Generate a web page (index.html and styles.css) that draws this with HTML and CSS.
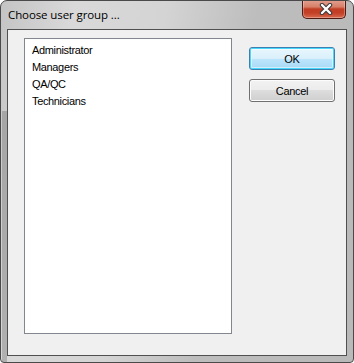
FILE: index.html
```html
<!DOCTYPE html>
<html lang="en">
<head>
    <meta charset="UTF-8">
    <title>Choose user group</title>
    <link rel="stylesheet" href="styles.css">
</head>
<body>
    <div class="window">
        <div class="titlebar">
            <span class="title">Choose user group ...</span>
            <button class="close-btn" title="Close">
                <svg width="14" height="12" viewBox="0 0 14 12">
                    <path d="M3 2 L11 10 M11 2 L3 10" stroke="#3a3a3a" stroke-width="4.4" stroke-linecap="round"/>
                    <path d="M3 2 L11 10 M11 2 L3 10" stroke="#ffffff" stroke-width="2.4" stroke-linecap="round"/>
                </svg>
            </button>
        </div>
        <div class="client">
            <ul class="group-list">
                <li>Administrator</li>
                <li>Managers</li>
                <li>QA/QC</li>
                <li>Technicians</li>
            </ul>
            <div class="btn-col">
                <button class="dlg-btn default">OK</button>
                <button class="dlg-btn">Cancel</button>
            </div>
        </div>
    </div>
</body>
</html>
```

FILE: styles.css
```css
body {
    margin: 0;
    background: #ffffff;
}
.window {
    width: 354px;
    height: 363px;
    box-sizing: border-box;
    border: 1px solid #4a4a4a;
    border-radius: 7px 7px 4px 4px;
    background:
        linear-gradient(90deg, rgba(0,0,0,0.18) 0px, rgba(0,0,0,0.18) 5px, transparent 5px) 1px 110px / 6px 100% no-repeat,
        linear-gradient(100deg, #c4c4c4 0%, #d9d9d9 18%, #d4d4d4 40%, #bdbdbd 62%, #b9b9b9 100%);
    padding: 0 6px 6px 6px;
    display: flex;
    flex-direction: column;
    overflow: hidden;
}
.titlebar {
    height: 28px;
    display: flex;
    align-items: flex-start;
}
.title {
    font-family: 'Open Sans', 'Noto Sans', sans-serif;
    font-size: 11.5px;
    color: #000000;
    margin: 6px 0 0 1px;
    letter-spacing: -0.1px;
}
.close-btn {
    margin-left: auto;
    margin-right: 1px;
    width: 44px;
    height: 19px;
    margin-top: -1px;
    border: 1px solid #4e1a12;
    border-top: none;
    border-radius: 0 0 5px 5px;
    background: linear-gradient(180deg, #e3a191 0%, #d77f69 38%, #c13e25 50%, #c33f26 72%, #d86a50 100%);
    box-shadow: inset 0 0 0 1px rgba(255,255,255,0.3);
    padding: 0;
    display: flex;
    align-items: center;
    justify-content: center;
}
.close-btn svg {
    display: block;
    margin-left: 4px;
}
.client {
    flex: 1;
    display: flex;
    align-items: flex-start;
    border: 1px solid #505050;
    background: #f0f0f0;
    padding: 8px 11px 21px 16px;
}
.group-list {
    list-style: none;
    margin: 0;
    padding: 3px 0 0 7px;
    width: 208px;
    height: 296px;
    box-sizing: border-box;
    background: #ffffff;
    border: 1px solid #828790;
    font-family: 'Liberation Sans', Arial, sans-serif;
    font-size: 11px;
    letter-spacing: -0.35px;
    color: #000000;
}
.group-list li {
    height: 17px;
    line-height: 17px;
}
.btn-col {
    display: flex;
    flex-direction: column;
    gap: 9px;
    margin-left: 17px;
    padding-top: 9px;
}
.dlg-btn {
    width: 86px;
    height: 23px;
    border: 1px solid #707070;
    border-radius: 3px;
    background: linear-gradient(180deg, #f2f2f2 0%, #ebebeb 50%, #dddddd 50%, #cfcfcf 100%);
    box-shadow: inset 0 0 0 1px #fcfcfc;
    font-family: 'Liberation Sans', Arial, sans-serif;
    font-size: 11px;
    letter-spacing: -0.3px;
    color: #000000;
    padding: 0;
}
.dlg-btn.default {
    border-color: #3c7fb1;
    background: linear-gradient(180deg, #eaf6fd 0%, #d9f0fc 50%, #bee6fd 50%, #a7d9f5 100%);
    box-shadow: inset 0 0 0 1px #48d8fb, inset 0 0 0 2px rgba(255,255,255,0.5);
}
```
